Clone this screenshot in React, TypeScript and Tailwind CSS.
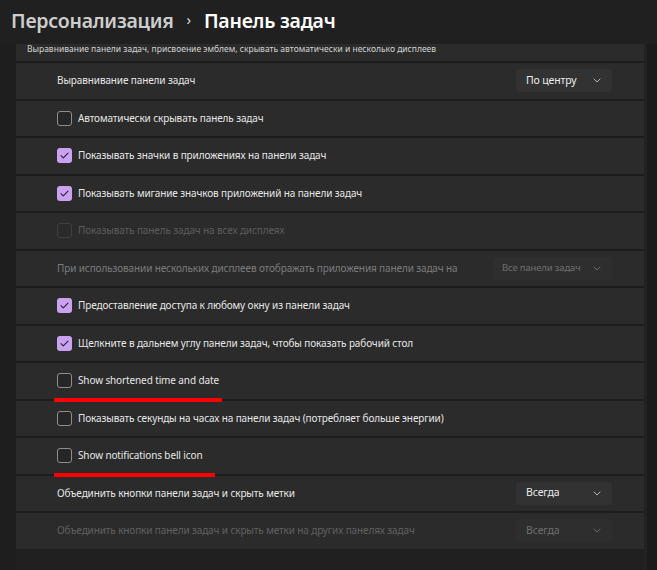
import React from 'react';

type Row =
  | { kind: 'select'; label: string; value: string; disabled?: boolean; wide?: boolean }
  | { kind: 'check'; label: string; checked?: boolean; disabled?: boolean; mark?: number };

const rows: Row[] = [
  { kind: 'select', label: 'Выравнивание панели задач', value: 'По центру' },
  { kind: 'check', label: 'Автоматически скрывать панель задач' },
  { kind: 'check', label: 'Показывать значки в приложениях на панели задач', checked: true },
  { kind: 'check', label: 'Показывать мигание значков приложений на панели задач', checked: true },
  { kind: 'check', label: 'Показывать панель задач на всех дисплеях', disabled: true },
  {
    kind: 'select',
    label: 'При использовании нескольких дисплеев отображать приложения панели задач на',
    value: 'Все панели задач',
    disabled: true,
    wide: true,
  },
  { kind: 'check', label: 'Предоставление доступа к любому окну из панели задач', checked: true },
  { kind: 'check', label: 'Щелкните в дальнем углу панели задач, чтобы показать рабочий стол', checked: true },
  { kind: 'check', label: 'Show shortened time and date', mark: 168 },
  { kind: 'check', label: 'Показывать секунды на часах на панели задач (потребляет больше энергии)' },
  { kind: 'check', label: 'Show notifications bell icon', mark: 161 },
  { kind: 'select', label: 'Объединить кнопки панели задач и скрыть метки', value: 'Всегда' },
  {
    kind: 'select',
    label: 'Объединить кнопки панели задач и скрыть метки на других панелях задач',
    value: 'Всегда',
    disabled: true,
  },
];

const Chevron = ({ dim }: { dim?: boolean }) => (
  <svg width="8" height="5" viewBox="0 0 8 5" className={'shrink-0 ' + (dim ? 'text-[#6a6a6a]' : 'text-[#b5b5b5]')}>
    <path d="M1 1 L4 4 L7 1" fill="none" stroke="currentColor" strokeWidth="1" strokeLinecap="round" />
  </svg>
);

const Checkbox = ({ checked, disabled }: { checked?: boolean; disabled?: boolean }) => {
  if (checked) {
    return (
      <div className="w-[15px] h-[15px] rounded-[3px] bg-[#c9a2f2] flex items-center justify-center shrink-0">
        <svg width="9" height="7" viewBox="0 0 9 7">
          <path d="M1 3.6 L3.3 5.8 L8 1.2" fill="none" stroke="#2a2130" strokeWidth="1.1" strokeLinecap="round" strokeLinejoin="round" />
        </svg>
      </div>
    );
  }
  return (
    <div
      className={
        'w-[15px] h-[15px] rounded-[3px] border shrink-0 ' +
        (disabled ? 'border-[#3f3f3f] bg-[#2a2a2a]' : 'border-[#8e8e8e] bg-[#262626]')
      }
    />
  );
};

export default function App() {
  return (
    <div
      className="w-[657px] h-[570px] bg-[#202020] overflow-hidden flex flex-col text-[#e4e4e4]"
      style={{ fontFamily: '"Noto Sans", "Open Sans", sans-serif' }}
    >
      <div className="h-[44px] shrink-0 flex items-center pl-[11px] pb-[2px] gap-[13px] text-[19.5px] font-semibold tracking-[-0.25px]">
        <span className="text-[#cdcdcd]">Персонализация</span>
        <span className="text-[#d8d8d8] text-[15px] font-normal -mt-[3px]">›</span>
        <span className="text-white">Панель задач</span>
      </div>

      <div className="flex flex-1 min-h-0">
        <div className="w-[16px] shrink-0 bg-[#1e1e1e]" />
        <div className="w-[628px] shrink-0 flex flex-col gap-[2px] bg-[#1d1d1d] self-start">
          <div className="h-[17px] bg-[#2b2b2b] overflow-hidden pl-[11px] flex items-start">
            <span className="-mt-[1px] text-[8.5px] leading-[12px] text-[#d2d2d2] whitespace-nowrap">
              Выравнивание панели задач, присвоение эмблем, скрывать автоматически и несколько дисплеев
            </span>
          </div>
          {rows.map((r, i) => (
            <div key={i} className="relative h-[35.5px] bg-[#2b2b2b] flex items-center pl-[41px] pr-[32px]">
              {r.kind === 'check' ? (
                <div className="flex items-center gap-[6px]">
                  <Checkbox checked={r.checked} disabled={r.disabled} />
                  <span
                    className={
                      'text-[10px] tracking-[-0.12px] whitespace-nowrap ' +
                      (r.disabled ? 'text-[#5c5c5c]' : 'text-[#e6e6e6]')
                    }
                  >
                    {r.label}
                  </span>
                </div>
              ) : (
                <>
                  <span
                    className={
                      'text-[10px] tracking-[-0.12px] whitespace-nowrap flex-1 ' +
                      (r.disabled ? (r.wide ? 'text-[#7b7b7b]' : 'text-[#606060]') : 'text-[#e6e6e6]')
                    }
                  >
                    {r.label}
                  </span>
                  <div
                    className={
                      'h-[23px] rounded-[4px] flex items-center justify-between ' +
                      (r.wide ? 'w-[119px] pl-[9px] pr-[11px] ' : 'w-[96px] pl-[10px] pr-[11px] ') +
                      (r.disabled ? 'bg-[#2e2e2e] text-[#6e6e6e]' : 'bg-[#323232] text-[#ececec]')
                    }
                  >
                    <span
                      className={
                        'whitespace-nowrap ' + (r.wide ? 'text-[9.5px] tracking-[-0.15px]' : 'text-[10.5px] tracking-[-0.12px]')
                      }
                    >
                      {r.value}
                    </span>
                    <Chevron dim={r.disabled} />
                  </div>
                </>
              )}
              {r.kind === 'check' && r.mark ? (
                <div className="absolute left-[38px] bottom-[-3px] h-[4px] bg-[#ff0000] z-10" style={{ width: r.mark }} />
              ) : null}
            </div>
          ))}
        </div>
        <div className="w-[3px] shrink-0 bg-[#222222]" />
        <div className="flex-1 bg-[#1b1b1b]" />
      </div>
    </div>
  );
}
